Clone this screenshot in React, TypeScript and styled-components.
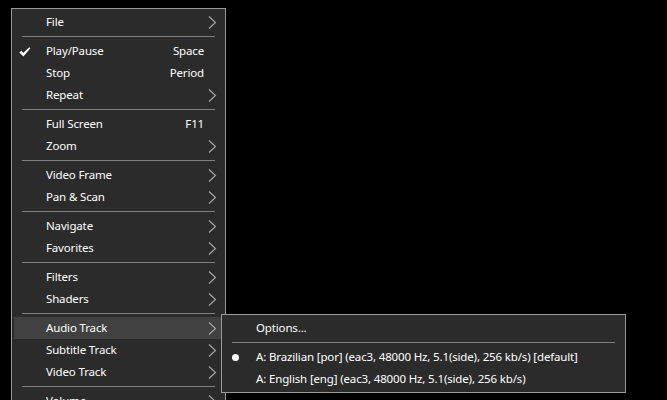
import styled, { createGlobalStyle } from 'styled-components';

const GlobalStyle = createGlobalStyle`
  html, body {
    margin: 0;
    padding: 0;
    background: #000;
    overflow: hidden;
  }
  body {
    font-family: "Noto Sans", "Open Sans", sans-serif;
    font-size: 11.5px;
    letter-spacing: -0.15px;
    color: #fff;
  }
`;

type Item =
  | { kind: 'sep' }
  | {
      kind: 'item';
      label: string;
      shortcut?: string;
      arrow?: boolean;
      checked?: boolean;
      active?: boolean;
    };

const mainItems: Item[] = [
  { kind: 'item', label: 'File', arrow: true },
  { kind: 'sep' },
  { kind: 'item', label: 'Play/Pause', shortcut: 'Space', checked: true },
  { kind: 'item', label: 'Stop', shortcut: 'Period' },
  { kind: 'item', label: 'Repeat', arrow: true },
  { kind: 'sep' },
  { kind: 'item', label: 'Full Screen', shortcut: 'F11' },
  { kind: 'item', label: 'Zoom', arrow: true },
  { kind: 'sep' },
  { kind: 'item', label: 'Video Frame', arrow: true },
  { kind: 'item', label: 'Pan & Scan', arrow: true },
  { kind: 'sep' },
  { kind: 'item', label: 'Navigate', arrow: true },
  { kind: 'item', label: 'Favorites', arrow: true },
  { kind: 'sep' },
  { kind: 'item', label: 'Filters', arrow: true },
  { kind: 'item', label: 'Shaders', arrow: true },
  { kind: 'sep' },
  { kind: 'item', label: 'Audio Track', arrow: true, active: true },
  { kind: 'item', label: 'Subtitle Track', arrow: true },
  { kind: 'item', label: 'Video Track', arrow: true },
  { kind: 'sep' },
  { kind: 'item', label: 'Volume', arrow: true },
  { kind: 'item', label: 'After Playback', arrow: true },
];

const audioTracks = [
  { label: 'A: Brazilian [por] (eac3, 48000 Hz, 5.1(side), 256 kb/s) [default]', selected: true },
  { label: 'A: English [eng] (eac3, 48000 Hz, 5.1(side), 256 kb/s)', selected: false },
];

export default function App() {
  return (
    <Screen>
      <GlobalStyle />
      <Menu $width={215}>
        {mainItems.map((item, index) => {
          if (item.kind === 'sep') return <Separator key={index} />;
          return (
            <Row key={index} $active={item.active}>
              <Mark>{item.checked && <CheckIcon />}</Mark>
              <Label>{item.label}</Label>
              {item.shortcut && <Shortcut>{item.shortcut}</Shortcut>}
              <ArrowSlot>{item.arrow && <Chevron />}</ArrowSlot>
              {item.active && (
                <SubMenu $width={405}>
                  <Row>
                    <Mark />
                    <Label>Options...</Label>
                  </Row>
                  <Separator />
                  {audioTracks.map((track) => (
                    <Row key={track.label}>
                      <Mark>{track.selected && <Bullet />}</Mark>
                      <Label>{track.label}</Label>
                    </Row>
                  ))}
                </SubMenu>
              )}
            </Row>
          );
        })}
      </Menu>
    </Screen>
  );
}

function CheckIcon() {
  return (
    <svg width="12" height="10" viewBox="0 0 12 10">
      <path d="M0.3 5.4 L2.6 3.6 L4.2 5.9 L10.2 0.2 L11.4 1.2 L4.4 9.6 Z" fill="#fff" />
    </svg>
  );
}

function Chevron() {
  return (
    <svg width="9" height="13" viewBox="0 0 9 13">
      <polyline points="1,0.5 7.5,6.5 1,12.5" fill="none" stroke="#a8a8a8" strokeWidth="1.1" />
    </svg>
  );
}

const Screen = styled.div`
  height: 400px;
  padding: 8px 0 0 11px;
  box-sizing: border-box;
  overflow: hidden;
`;

const Menu = styled.div<{ $width: number }>`
  width: ${(p) => p.$width}px;
  box-sizing: border-box;
  background: #2b2b2b;
  border: 1px solid #9a9a9a;
  padding: 2px;
  display: flex;
  flex-direction: column;
`;

const SubMenu = styled(Menu)`
  position: absolute;
  top: -3px;
  left: calc(100% - 2px);
  z-index: 2;
`;

const Row = styled.div<{ $active?: boolean }>`
  position: relative;
  height: 22px;
  display: flex;
  align-items: center;
  background: ${(p) => (p.$active ? '#414141' : 'transparent')};
  white-space: nowrap;
`;

const Mark = styled.span`
  width: 32px;
  flex: none;
  display: flex;
  align-items: center;
  padding-left: 5px;
  padding-top: 1px;
  box-sizing: border-box;
`;

const Label = styled.span`
  flex: 1;
  line-height: 22px;
`;

const Shortcut = styled.span`
  line-height: 22px;
  margin-right: -1px;
`;

const ArrowSlot = styled.span`
  width: 20px;
  flex: none;
  display: flex;
  justify-content: flex-end;
  padding-right: 6px;
  box-sizing: border-box;
`;

const Separator = styled.div`
  height: 1px;
  margin: 3px 8px;
  background: #808080;
`;

const Bullet = styled.span`
  display: block;
  width: 7px;
  height: 7px;
  margin-left: 3px;
  border-radius: 50%;
  background: #fff;
`;
